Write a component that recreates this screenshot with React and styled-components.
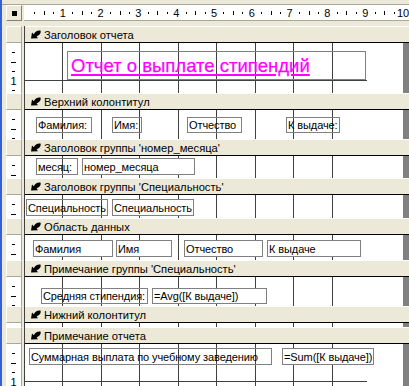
import React from 'react';
import styled, { createGlobalStyle } from 'styled-components';

const CM = 37.8;

const GlobalStyle = createGlobalStyle`
  html, body {
    margin: 0;
    padding: 0;
    overflow: hidden;
    background: #ece9d8;
  }
  body {
    font-family: "Liberation Sans", Arial, sans-serif;
  }
`;

const Frame = styled.div`
  width: 409px;
  height: 386px;
  box-sizing: border-box;
  overflow: hidden;
  display: flex;
  flex-direction: column;
  background: #ece9d8;
  border-left: 2px solid #3161d6;
`;

const TopRow = styled.div`
  display: flex;
  height: 17px;
  margin-top: 4px;
  margin-bottom: 5px;
  box-sizing: border-box;
  border-top: 1px solid #aca899;
`;

const Corner = styled.div`
  width: 16px;
  margin-left: 4px;
  box-sizing: border-box;
  border: 1px solid;
  border-color: #fff #808080 #808080 #fff;
  display: flex;
  align-items: center;
  justify-content: center;

  &::after {
    content: '';
    width: 5px;
    height: 5px;
    background: #000;
  }
`;

const RulerStrip = styled.div`
  flex: 1;
  margin-left: 2px;
  background: #fff;
  border-bottom: 1px solid #aca899;
  overflow: hidden;
`;

const Row = styled.div`
  display: flex;
  flex: none;
  height: ${({ $h }) => $h}px;
`;

const Gutter = styled.div`
  width: 22px;
  box-sizing: border-box;
  padding: 0 2px 0 4px;
  display: flex;
`;

const Selector = styled.div`
  flex: 1;
  box-sizing: border-box;
  background: #ece9d8;
  border: 1px solid;
  border-color: #fff #aca899 #aca899 #fff;
`;

const SideRuler = styled.div`
  flex: 1;
  background: #fff;
  border-right: 1px solid #aca899;
  overflow: hidden;
`;

const Content = styled.div`
  flex: 1;
  display: flex;
  border-left: 1px solid #404040;
  min-width: 0;
`;

const HeaderBar = styled.div`
  flex: 1;
  display: flex;
  align-items: center;
  gap: 3px;
  padding-left: 6px;
  box-sizing: border-box;
  background: #ece9d8;
  border-top: 1px solid #fff;
  border-bottom: 1px solid #000;
  font-size: 11.2px;
  color: #000;
  white-space: nowrap;
`;

const Body = styled.div`
  flex: 1;
  display: flex;
  background: #fff;
`;

const Canvas = styled.div`
  flex: 1;
  position: relative;
  background-image:
    repeating-linear-gradient(to right, transparent 0 37.3px, #404040 37.3px 38.5px),
    repeating-linear-gradient(to bottom, transparent 0 36.8px, #404040 36.8px 38px);
  background-size: 342px 100%;
  background-repeat: no-repeat;
`;

const RightEdge = styled.div`
  width: 6px;
  background: #808080;
`;

const Control = styled.div`
  position: absolute;
  left: ${({ $x }) => $x}px;
  top: ${({ $y }) => $y}px;
  width: ${({ $w }) => $w}px;
  height: ${({ $h }) => $h}px;
  box-sizing: border-box;
  border: 1px solid #808080;
  background: ${({ $bound }) => ($bound ? '#fff' : 'transparent')};
  display: flex;
  align-items: center;
  padding-left: ${({ $title }) => ($title ? '3px' : '1px')};
  overflow: hidden;
  white-space: nowrap;
  letter-spacing: ${({ $title }) => ($title ? '0' : '-0.1px')};
  font-size: ${({ $title }) => ($title ? '18.5px' : '11px')};
  color: ${({ $title }) => ($title ? '#ff00ff' : '#000')};
  text-decoration: ${({ $title }) => ($title ? 'underline' : 'none')};
  text-decoration-thickness: 2px;
  text-underline-offset: 2px;
  ${({ $title }) => $title && '-webkit-text-stroke: 0.25px #ff00ff;'}
`;

const sections = [
  {
    title: 'Заголовок отчета',
    height: 50,
    controls: [{ x: 42, y: 8, w: 299, h: 29, text: 'Отчет о выплате стипендий', title: true }],
  },
  {
    title: 'Верхний колонтитул',
    height: 29,
    controls: [
      { x: 11, y: 7, w: 56, h: 16, text: 'Фамилия:' },
      { x: 87, y: 7, w: 30, h: 16, text: 'Имя:' },
      { x: 162, y: 7, w: 55, h: 16, text: 'Отчество' },
      { x: 261, y: 7, w: 54, h: 16, text: 'К выдаче:' },
    ],
  },
  {
    title: "Заголовок группы 'номер_месяца'",
    height: 22,
    controls: [
      { x: 11, y: 2, w: 42, h: 17, text: 'месяц:' },
      { x: 57, y: 2, w: 113, h: 17, text: 'номер_месяца', bound: true },
    ],
  },
  {
    title: "Заголовок группы 'Специальность'",
    height: 23,
    controls: [
      { x: 1, y: 4, w: 82, h: 17, text: 'Специальность:' },
      { x: 87, y: 4, w: 82, h: 17, text: 'Специальность', bound: true },
    ],
  },
  {
    title: 'Область данных',
    height: 25,
    controls: [
      { x: 8, y: 5, w: 80, h: 17, text: 'Фамилия', bound: true },
      { x: 91, y: 5, w: 56, h: 17, text: 'Имя', bound: true },
      { x: 159, y: 5, w: 79, h: 17, text: 'Отчество', bound: true },
      { x: 242, y: 5, w: 94, h: 17, text: 'К выдаче', bound: true },
    ],
  },
  {
    title: "Примечание группы 'Специальность'",
    height: 29,
    controls: [
      { x: 16, y: 11, w: 107, h: 16, text: 'Средняя стипендия:' },
      { x: 127, y: 11, w: 115, h: 16, text: '=Avg([К выдаче])', bound: true },
    ],
  },
  { title: 'Нижний колонтитул', height: 4, controls: [] },
  {
    title: 'Примечание отчета',
    height: 60,
    controls: [
      { x: 4, y: 4, w: 243, h: 17, text: 'Суммарная выплата по учебному заведению' },
      { x: 257, y: 4, w: 92, h: 17, text: '=Sum([К выдаче])', bound: true },
    ],
  },
];

const SectionIcon = () => (
  <svg width="10" height="9" viewBox="0 0 10 9">
    <path d="M0 8.5 L1 2.5 L2.8 4.2 C4 1.5 6.5 0 9.5 0.5 C10 2 9.5 4 8 5 C7.2 5.6 6.3 6 5.6 6.6 L7 8.3 Z" fill="#000" />
  </svg>
);

const TopRuler = () => {
  const marks = [];
  for (let k = 1; k <= 41; k++) {
    const x = 1 + (k * CM) / 4;
    if (k % 4 === 0) {
      marks.push(
        <text key={k} x={x} y="11.5" textAnchor="middle" fontSize="11" fontFamily="Liberation Sans, Arial, sans-serif">
          {k / 4}
        </text>
      );
    } else if (k % 2 === 0) {
      marks.push(<rect key={k} x={Math.round(x)} y="6" width="1" height="4" fill="#000" />);
    } else {
      marks.push(<rect key={k} x={Math.round(x)} y="7" width="1" height="2" fill="#000" />);
    }
  }
  return (
    <svg width="385" height="15">
      {marks}
    </svg>
  );
};

const VRuler = ({ height }) => {
  const marks = [];
  for (let k = 1; (k * CM) / 4 < height; k++) {
    const y = (k * CM) / 4;
    if (k % 4 === 0) {
      marks.push(
        <text key={k} x="7.5" y={y + 4} textAnchor="middle" fontSize="11" fontFamily="Liberation Sans, Arial, sans-serif">
          {k / 4}
        </text>
      );
    } else if (k % 2 === 0) {
      marks.push(<rect key={k} x="5" y={Math.round(y)} width="5" height="1" fill="#000" />);
    } else {
      marks.push(<rect key={k} x="6" y={Math.round(y)} width="3" height="1" fill="#000" />);
    }
  }
  return (
    <SideRuler>
      <svg width="15" height={height}>
        {marks}
      </svg>
    </SideRuler>
  );
};

const Section = ({ title, height, controls }) => (
  <>
    <Row $h={17}>
      <Gutter>
        <Selector />
      </Gutter>
      <Content>
        <HeaderBar>
          <SectionIcon />
          {title}
        </HeaderBar>
      </Content>
    </Row>
    <Row $h={height}>
      <Gutter>
        <VRuler height={height} />
      </Gutter>
      <Content>
        <Body>
          <Canvas>
            {controls.map((c) => (
              <Control key={c.text} $x={c.x} $y={c.y} $w={c.w} $h={c.h} $bound={c.bound} $title={c.title}>
                {c.text}
              </Control>
            ))}
          </Canvas>
          <RightEdge />
        </Body>
      </Content>
    </Row>
  </>
);

const App = () => (
  <>
    <GlobalStyle />
    <Frame>
      <TopRow>
        <Corner />
        <RulerStrip>
          <TopRuler />
        </RulerStrip>
      </TopRow>
      {sections.map((s) => (
        <Section key={s.title} {...s} />
      ))}
    </Frame>
  </>
);

export default App;
